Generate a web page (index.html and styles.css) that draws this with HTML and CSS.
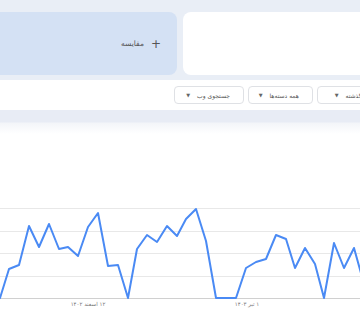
FILE: index.html
```html
<!DOCTYPE html>
<html lang="fa" dir="rtl">
<head>
    <meta charset="UTF-8">
    <title>Trends</title>
    <link rel="stylesheet" href="styles.css">
</head>
<body>
<div class="top">
    <div class="cards">
        <div class="card search"></div>
        <div class="card compare">
            <span class="plus">+</span>
            <span class="compare-text">مقایسه</span>
        </div>
    </div>
</div>
<div class="filters">
    <div class="filter wide">۱۲ ماه گذشته <span class="arrow">&#9660;</span></div>
    <div class="filter">همه دسته‌ها <span class="arrow">&#9660;</span></div>
    <div class="filter">جستجوی وب <span class="arrow">&#9660;</span></div>
</div>
<div class="band"></div>
<div class="chart">
    <svg width="360" height="186" viewBox="0 134 360 186">
        <g stroke="#e8e8e8" stroke-width="1">
            <line x1="0" y1="208.5" x2="360" y2="208.5"/>
            <line x1="0" y1="231.5" x2="360" y2="231.5"/>
            <line x1="0" y1="253.5" x2="360" y2="253.5"/>
            <line x1="0" y1="276.5" x2="360" y2="276.5"/>
        </g>
        <line x1="0" y1="298.5" x2="360" y2="298.5" stroke="#d0d0d0" stroke-width="1"/>
        <polyline fill="none" stroke="#4a8af4" stroke-width="2" stroke-linejoin="round"
            points="-10,268 0,298 9,269 19,265 29,226 39,247 49,224 59,249 68,247 78,256 88,227 98,213 108,266 118,265 128,298 137,249 147,235 157,242 167,226 177,236 186,219 196,209 206,241 216,298 236,298 246,268 256,262 266,259 276,235 286,239 295,268 305,248 315,264 324,298 334,243 344,268 354,248 364,284"/>
        <text class="axis" x="88" y="306">۱۲ اسفند ۱۴۰۲</text>
        <text class="axis" x="247" y="306">۱ تیر ۱۴۰۳</text>
    </svg>
</div>
</body>
</html>
```

FILE: styles.css
```css
html, body {
    margin: 0;
    padding: 0;
    width: 360px;
    height: 320px;
    overflow: hidden;
    background: #fff;
    font-family: "DejaVu Sans", sans-serif;
}
.top {
    background: #e9eef6;
    height: 80px;
    padding-top: 12px;
    box-sizing: border-box;
}
.cards {
    display: flex;
    gap: 6px;
    height: 63px;
    margin-right: -30px;
    margin-left: -30px;
}
.card {
    border-radius: 8px;
}
.search {
    background: #fff;
    width: 207px;
}
.compare {
    flex: 1;
    background: #d4e1f4;
    display: flex;
    align-items: center;
    gap: 7px;
    padding-right: 16px;
    color: #555;
}
.plus {
    font-size: 12px;
    line-height: 1;
}
.compare-text {
    font-size: 7.5px;
}
.filters {
    display: flex;
    gap: 4px;
    margin-top: 6px;
    margin-right: -34px;
    height: 18px;
}
.filter {
    flex: none;
    height: 18px;
    box-sizing: border-box;
    border: 1px solid #dfe1e5;
    border-radius: 4px;
    padding: 0 13px;
    font-size: 6px;
    color: #555;
    display: flex;
    align-items: center;
    gap: 7px;
    white-space: nowrap;
}
.filter.wide {
    width: 77px;
}
.filter:nth-child(2) {
    width: 65px;
}
.filter:nth-child(3) {
    width: 70px;
}
.arrow {
    font-size: 5px;
    color: #666;
}
.band {
    margin-top: 6px;
    height: 24px;
    background: linear-gradient(#e8ecf5 0, #e8ecf5 12px, #f3f5f9 13px, #fff 24px);
}
.chart svg {
    display: block;
}
.axis {
    font-size: 5.5px;
    fill: #777;
    text-anchor: middle;
    direction: rtl;
}
```
